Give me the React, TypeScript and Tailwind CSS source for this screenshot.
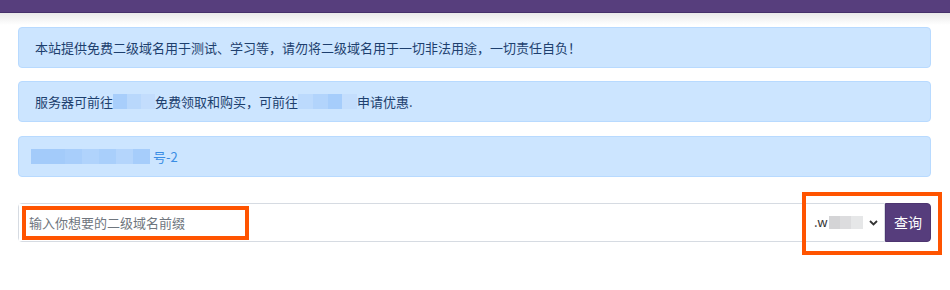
import React from "react";

const font = { fontFamily: '"Noto Sans CJK SC", "Microsoft YaHei", sans-serif' };

function Blur({ w, segs }: { w: number; segs: string[] }) {
  return (
    <span className="inline-flex h-[15px] align-middle overflow-hidden" style={{ width: w }}>
      {segs.map((c, i) => (
        <span key={i} className="flex-1 h-full" style={{ background: c, filter: "blur(0.5px)" }} />
      ))}
    </span>
  );
}

export default function App() {
  return (
    <div className="relative w-[950px] h-[290px] bg-white overflow-hidden" style={font}>
      <div className="h-[13px] bg-[#573e7d] border-b border-[#45306a]" />
      <div className="h-[12px] bg-gradient-to-b from-[#e9e9e9] to-white" />
      <div className="pl-[18px] pr-[19px] pt-[2px]">
        <div className="h-[41px] flex items-center px-[16px] bg-[#cce5ff] border border-[#b8daff] rounded text-[13px] text-[#1d3f6e]">
          本站提供免费二级域名用于测试、学习等，请勿将二级域名用于一切非法用途，一切责任自负！
        </div>
        <div className="mt-[13px] h-[41px] flex items-center px-[16px] bg-[#cce5ff] border border-[#b8daff] rounded text-[13px] text-[#1d3f6e]">
          <span>服务器可前往</span>
          <Blur w={42} segs={["#a8cefb", "#b9d8fc", "#c3ddfd"]} />
          <span>免费领取和购买，可前往</span>
          <Blur w={59} segs={["#bcdafd", "#b2d4fc", "#a6cdfb", "#c4defd"]} />
          <span>申请优惠.</span>
        </div>
        <div className="mt-[14px] h-[41px] flex items-center pl-[12px] pr-[16px] bg-[#cce5ff] border border-[#b8daff] rounded text-[13px]">
          <Blur w={119} segs={["#a3cbfa", "#a3cbfa", "#a8cefb", "#b0d3fc", "#a9cffb", "#b4d5fc", "#a6cdfb"]} />
          <span className="ml-[3px] text-[#3a8de4]">号-2</span>
        </div>
        <div className="mt-[26px] h-[39px] flex">
          <div className="flex-1 flex border border-[#d6dbe2] rounded-l">
            <input
              className="flex-1 pl-[10px] text-[13px] outline-none bg-white placeholder:text-[#6f767e]"
              placeholder="输入你想要的二级域名前缀"
              style={font}
            />
            <div className="w-[82px] flex items-center pl-[12px] pr-[6px] text-[13px] text-[#333]">
              <span className="-mt-[1px]">.w</span>
              <span className="ml-[1px] inline-flex h-[13px] w-[34px]">
                <span className="flex-1 bg-[#d4d4d6]" />
                <span className="flex-1 bg-[#dcdcde]" />
                <span className="flex-1 bg-[#e6e7e8]" />
              </span>
              <svg className="ml-auto" width="9" height="6" viewBox="0 0 9 6">
                <path d="M1 1 L4.5 4.5 L8 1" stroke="#333" strokeWidth="1.8" fill="none" />
              </svg>
            </div>
          </div>
          <button className="w-[46px] bg-[#563d7c] text-white text-[14px] rounded-r border border-[#4d3570]" style={font}>
            查询
          </button>
        </div>
      </div>
      <div className="absolute left-[22px] top-[206px] w-[227px] h-[34px] border-[4px] border-[#ff5400]" />
      <div className="absolute left-[802px] top-[192px] w-[140px] h-[63px] border-[4px] border-[#ff5400]" />
    </div>
  );
}
